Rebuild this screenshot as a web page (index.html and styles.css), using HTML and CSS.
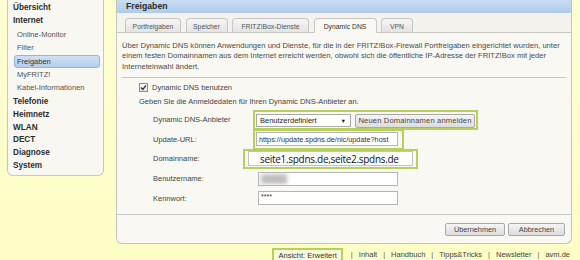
FILE: index.html
```html
<!DOCTYPE html>
<html lang="de">
<head>
  <meta charset="UTF-8" />
  <title>FRITZ!Box - Freigaben</title>
  <link rel="stylesheet" href="styles.css">
</head>
<body>
<div class="page">

  <!-- Navigation -->
  <nav class="menu">
    <a class="main first">Übersicht</a>
    <a class="main">Internet</a>
    <div class="subs">
      <a class="sub">Online-Monitor</a>
      <a class="sub">Filter</a>
      <a class="sub active">Freigaben</a>
      <a class="sub">MyFRITZ!</a>
      <a class="sub">Kabel-Informationen</a>
    </div>
    <div class="mains">
      <a class="main">Telefonie</a>
      <a class="main">Heimnetz</a>
      <a class="main">WLAN</a>
      <a class="main">DECT</a>
      <a class="main">Diagnose</a>
      <a class="main">System</a>
    </div>
  </nav>

  <div class="content">
    <div class="panel">
      <div class="head">Freigaben</div>
      <div class="tabs">
        <span class="tab w1">Portfreigaben</span>
        <span class="tab w2">Speicher</span>
        <span class="tab w3">FRITZ!Box-Dienste</span>
        <span class="tab w4 current">Dynamic DNS</span>
        <span class="tab w5">VPN</span>
      </div>

      <div class="body">
        <p class="intro">Über Dynamic DNS können Anwendungen und Dienste, für die in der FRITZ!Box-Firewall Portfreigaben eingerichtet wurden, unter<br>einem festen Domainnamen aus dem Internet erreicht werden, obwohl sich die öffentliche IP-Adresse der FRITZ!Box mit jeder<br>Interneteinwahl ändert.</p>
        <div class="rule"></div>

        <div class="check-row">
          <span class="checkbox">
            <svg width="7" height="7" viewBox="0 0 7 7"><path d="M1 3.6 L2.8 5.4 L6 1.4" fill="none" stroke="#333" stroke-width="1.4"/></svg>
          </span>
          <span>Dynamic DNS benutzen</span>
        </div>
        <div class="hint">Geben Sie die Anmeldedaten für Ihren Dynamic DNS-Anbieter an.</div>

        <div class="form">
          <div class="row">
            <label>Dynamic DNS-Anbieter</label>
            <div class="hl hl-provider">
              <span class="select">Benutzerdefiniert<span class="arrow">▼</span></span>
              <span class="btn btn-new">Neuen Domainnamen anmelden</span>
            </div>
          </div>
          <div class="row">
            <label>Update-URL:</label>
            <div class="hl hl-url">
              <span class="input url">https://update.spdns.de/nic/update?host</span>
            </div>
          </div>
          <div class="row">
            <label>Domainname:</label>
            <div class="hl hl-domain">
              <span class="input domain">seite1.spdns.de,seite2.spdns.de</span>
            </div>
          </div>
          <div class="row">
            <label>Benutzername:</label>
            <span class="input plain"><span class="blur"></span></span>
          </div>
          <div class="row">
            <label>Kennwort:</label>
            <span class="input plain pw">****</span>
          </div>
        </div>
      </div>

      <div class="actions">
        <span class="btn btn-ok">Übernehmen</span>
        <span class="btn btn-cancel">Abbrechen</span>
      </div>
    </div>

    <div class="footer">
      <span class="view">Ansicht: Erweitert</span>
      <span class="sep">|</span><span>Inhalt</span>
      <span class="sep">|</span><span>Handbuch</span>
      <span class="sep">|</span><span>Tipps&amp;Tricks</span>
      <span class="sep">|</span><span>Newsletter</span>
      <span class="sep">|</span><span>avm.de</span>
    </div>
  </div>

</div>
</body>
</html>
```

FILE: styles.css
```css
body {
  margin: 0;
  width: 580px;
  height: 260px;
  overflow: hidden;
  background: linear-gradient(#fefed2, #fdfdc6);
  font-family: "Liberation Sans", Arial, sans-serif;
  color: #444;
}
.page {
  display: flex;
  align-items: flex-start;
  padding-left: 7px;
}

/* navigation */
.menu {
  width: 95px;
  padding: 0 0 2px;
  background: #f8f7f1;
  border: 1px solid #c9c8c0;
  border-top: none;
  border-radius: 0 0 6px 6px;
}
.menu a {
  display: block;
  white-space: nowrap;
}
.main {
  height: 13px;
  line-height: 13px;
  padding-left: 5px;
  font-size: 8.2px;
  font-weight: bold;
  color: #2e2e2e;
}
.main.first {
  margin-top: 0.5px;
}
.subs {
  margin-top: 1.5px;
}
.sub {
  height: 13.3px;
  line-height: 13.3px;
  padding-left: 9px;
  font-size: 7.5px;
  color: #555;
}
.sub.active {
  margin: 0 3px 0 6px;
  padding-left: 2px;
  height: 13.3px;
  line-height: 12px;
  border: 1px solid #92b6de;
  border-radius: 3px;
  background: linear-gradient(#cfe0f4, #b3cdec);
  box-sizing: border-box;
  color: #333;
}
.mains {
  margin-top: 1.5px;
}
.mains .main {
  height: 12.8px;
  line-height: 12.8px;
}

/* panel */
.content {
  margin-left: 12px;
  width: 456px;
}
.panel {
  background: #f9f8f3;
  border: 1px solid #c6c5bd;
  border-top: none;
  border-radius: 0 0 6px 6px;
}
.head {
  height: 13px;
  line-height: 12px;
  padding-left: 9px;
  font-size: 8.7px;
  font-weight: bold;
  color: #2b2b2b;
  background: linear-gradient(#c9ddf2, #aecbea);
}
.tabs {
  display: flex;
  align-items: flex-end;
  gap: 4.5px;
  height: 19px;
  padding-left: 8px;
  background: #f3f2ec;
  border-bottom: 1px solid #c8c8c2;
}
.tab {
  height: 15px;
  line-height: 15px;
  margin-bottom: -1px;
  text-align: center;
  font-size: 6.8px;
  color: #555;
  background: linear-gradient(#f6f6f6, #e3e3e3);
  border: 1px solid #c6c6c6;
  border-bottom-color: #c8c8c2;
  border-radius: 4px 4px 0 0;
  box-sizing: border-box;
}
.tab.current {
  background: #f9f8f3;
  border-bottom-color: #f9f8f3;
  color: #333;
}
.w1 { width: 56px; }
.w2 { width: 42px; }
.w3 { width: 77px; }
.w4 { width: 63px; }
.w5 { width: 32px; }

.body {
  padding: 0 5px;
  font-size: 7.5px;
}
.intro {
  margin: 7.5px 0 0;
  line-height: 10.5px;
  font-size: 7.6px;
  white-space: nowrap;
  color: #4a4a4a;
}
.rule {
  margin-top: 5px;
  height: 1px;
  background: #c9c9c3;
}
.check-row {
  display: flex;
  align-items: center;
  gap: 4px;
  height: 15px;
  margin-top: 2px;
  padding-left: 17px;
}
.checkbox {
  display: flex;
  align-items: center;
  justify-content: center;
  width: 7px;
  height: 7px;
  border: 1px solid #8c8c8c;
  background: linear-gradient(#fff, #e6e6e6);
}
.hint {
  height: 13px;
  line-height: 13px;
  padding-left: 17px;
}

.form {
  margin-top: 2px;
  padding-left: 31px;
}
.row {
  display: flex;
  align-items: center;
  height: 19.6px;
}
.row label {
  width: 103px;
  flex: none;
}
.input {
  display: block;
  height: 14px;
  line-height: 13px;
  padding-left: 2px;
  background: #fff;
  border: 1px solid #b4b4b4;
  box-sizing: border-box;
  white-space: nowrap;
  overflow: hidden;
  font-size: 7.3px;
  color: #333;
}
.select {
  position: relative;
  display: block;
  width: 95px;
  height: 13px;
  line-height: 12px;
  padding-left: 3px;
  background: #fff;
  border: 1px solid #a9a9a9;
  box-sizing: border-box;
  font-size: 7.5px;
  color: #222;
}
.arrow {
  position: absolute;
  right: 4px;
  top: 0;
  font-size: 5.5px;
  color: #222;
}
.btn {
  display: inline-block;
  height: 13px;
  line-height: 11px;
  text-align: center;
  font-size: 7.3px;
  color: #444;
  background: linear-gradient(#f5f5f5, #dcdcdc);
  border: 1px solid #a9a9a9;
  border-radius: 2px;
  box-sizing: border-box;
}
.btn-new {
  width: 120px;
  height: 14px;
  line-height: 12px;
  margin-left: 4px;
  font-size: 7.6px;
  letter-spacing: 0.15px;
}

/* green marks around fields */
.hl {
  display: flex;
  align-items: center;
  border: 2px solid #b5d15b;
  box-sizing: border-box;
}
.hl-provider {
  height: 20px;
  padding: 2px 1px 0 1px;
  margin-left: -3px;
}
.hl-url {
  height: 21px;
  padding: 0 4px 0 1px;
  margin-left: -3px;
}
.url {
  width: 142px;
}
.hl-domain {
  height: 20px;
  padding: 0 3px 0 3px;
  margin-left: -13px;
}
.domain {
  width: 165px;
  height: 15px;
  line-height: 14px;
  padding-left: 11px;
  border-color: #c2c2c2;
  font-family: "Open Sans", sans-serif;
  font-size: 10px;
  letter-spacing: -0.3px;
  color: #111;
}
.plain {
  width: 140px;
  margin-left: 2px;
}
.blur {
  display: block;
  width: 26px;
  height: 10px;
  margin-top: 1px;
  background: #bdbdbd;
  filter: blur(2px);
}
.pw {
  line-height: 9px;
  font-size: 7px;
}

.actions {
  display: flex;
  justify-content: flex-end;
  gap: 3px;
  padding: 8px 6px 7px;
  border-top: 1px solid #c9c9c3;
  margin-top: 6px;
}
.btn-ok { width: 60px; }
.btn-cancel { width: 57px; }

/* footer */
.footer {
  display: flex;
  justify-content: flex-end;
  align-items: center;
  height: 14px;
  margin-top: 4px;
  padding-right: 2px;
  font-size: 7.5px;
  color: #444;
  white-space: nowrap;
}
.sep {
  margin: 0 6px;
  color: #666;
}
.view {
  margin-right: 2px;
  padding: 0 4px;
  height: 14px;
  line-height: 11px;
  border: 2px solid #b5d15b;
  border-bottom: none;
  background: #f8f9da;
  box-sizing: border-box;
  color: #333;
}
```
